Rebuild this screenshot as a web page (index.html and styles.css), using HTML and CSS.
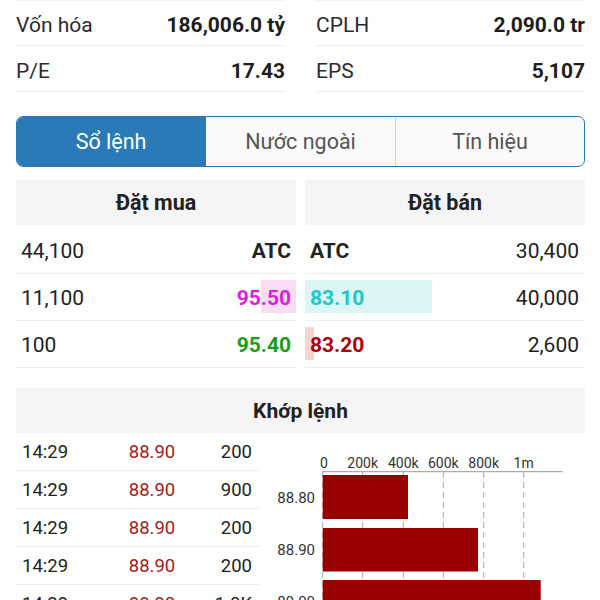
FILE: index.html
```html
<!DOCTYPE html>
<html lang="vi">
<head>
<meta charset="utf-8">
<link rel="stylesheet" href="styles.css">
</head>
<body>
<div class="page">
  <div class="stats">
    <div class="stat"><span class="lbl">Vốn hóa</span><span class="val">186,006.0 tỷ</span></div>
    <div class="stat"><span class="lbl">CPLH</span><span class="val">2,090.0 tr</span></div>
    <div class="stat"><span class="lbl">P/E</span><span class="val">17.43</span></div>
    <div class="stat"><span class="lbl">EPS</span><span class="val">5,107</span></div>
  </div>

  <div class="tabs">
    <div class="tab active">Sổ lệnh</div>
    <div class="tab">Nước ngoài</div>
    <div class="tab">Tín hiệu</div>
  </div>

  <div class="book">
    <div class="side buy">
      <div class="head">Đặt mua</div>
      <div class="rows">
        <div class="row"><span class="qty">44,100</span><span class="px atc">ATC</span></div>
        <div class="row"><span class="bar pink" style="width:35px"></span><span class="qty">11,100</span><span class="px magenta">95.50</span></div>
        <div class="row"><span class="qty">100</span><span class="px green">95.40</span></div>
      </div>
    </div>
    <div class="side sell">
      <div class="head">Đặt bán</div>
      <div class="rows">
        <div class="row"><span class="px atc">ATC</span><span class="qty">30,400</span></div>
        <div class="row"><span class="bar cyan" style="width:127px"></span><span class="px cyanc">83.10</span><span class="qty">40,000</span></div>
        <div class="row"><span class="bar red" style="width:9px"></span><span class="px redc">83.20</span><span class="qty">2,600</span></div>
      </div>
    </div>
  </div>

  <div class="match-head">Khớp lệnh</div>
  <div class="match">
    <div class="trades">
      <div class="trade"><span class="t">14:29</span><span class="p">88.90</span><span class="v">200</span></div>
      <div class="trade"><span class="t">14:29</span><span class="p">88.90</span><span class="v">900</span></div>
      <div class="trade"><span class="t">14:29</span><span class="p">88.90</span><span class="v">200</span></div>
      <div class="trade"><span class="t">14:29</span><span class="p">88.90</span><span class="v">200</span></div>
      <div class="trade"><span class="t">14:29</span><span class="p">88.90</span><span class="v">1.0K</span></div>
    </div>
    <svg class="chart" width="325" height="168" viewBox="0 0 325 168">
      <g class="grid">
        <line x1="62.7" y1="39" x2="62.7" y2="168"/>
        <line x1="102.7" y1="39" x2="102.7" y2="168"/>
        <line x1="143.3" y1="39" x2="143.3" y2="168"/>
        <line x1="183.3" y1="39" x2="183.3" y2="168"/>
        <line x1="223.7" y1="39" x2="223.7" y2="168"/>
        <line x1="263.7" y1="39" x2="263.7" y2="168"/>
      </g>
      <line class="axis" x1="62" y1="38.7" x2="302.7" y2="38.7"/>
      <g class="xl">
        <text x="64" y="34.5">0</text>
        <text x="102.7" y="34.5">200k</text>
        <text x="143.3" y="34.5">400k</text>
        <text x="183.3" y="34.5">600k</text>
        <text x="223.7" y="34.5">800k</text>
        <text x="263.7" y="34.5">1m</text>
      </g>
      <rect class="b" x="62.7" y="42" width="85.3" height="44"/>
      <rect class="b" x="62.7" y="95" width="155.3" height="43.5"/>
      <rect class="b" x="62.7" y="147" width="218" height="30"/>
      <g class="yl">
        <text x="55" y="69.5">88.80</text>
        <text x="55" y="121.5">88.90</text>
        <text x="55" y="173.5">89.00</text>
      </g>
    </svg>
  </div>
</div>
</body>
</html>
```
FILE: styles.css
```css
* { box-sizing: border-box; }
html, body { margin: 0; padding: 0; background: #fff; }
body {
  font-family: Roboto, "Noto Sans", "Liberation Sans", sans-serif;
  color: #222;
  width: 600px;
  height: 600px;
  overflow: hidden;
}
.page { padding: 0 15px 0 16px; }

.stats {
  display: grid;
  grid-template-columns: 1fr 1fr;
  column-gap: 31px;
}
.stat {
  display: flex;
  justify-content: space-between;
  align-items: center;
  height: 46px;
  padding: 4px 0 0 0;
  border-bottom: 1px solid #eeeeee;
  font-size: 21px;
}
.stat:nth-child(-n+2) { border-top: 1px solid #f2f2f2; }
.stat .lbl { color: #2b2b2b; }
.stat .val { font-weight: 700; color: #1e1e1e; }

.tabs {
  margin-top: 24px;
  display: grid;
  grid-template-columns: 1fr 1fr 1fr;
  height: 51px;
  border: 1.5px solid #2c78ae;
  border-radius: 7px;
  overflow: hidden;
  background: #fafafa;
}
.tab {
  display: flex;
  align-items: center;
  justify-content: center;
  font-size: 21.5px;
  color: #555;
}
.tab + .tab { border-left: 1px solid #c9d3dd; }
.tab.active { background: #2a7ab8; color: #fff; border-right: 1px solid #2a7ab8; }
.tab.active + .tab { border-left: none; }

.book {
  margin-top: 13px;
  display: grid;
  grid-template-columns: 1fr 1fr;
  column-gap: 9px;
}
.head {
  height: 45px;
  background: #f5f5f5;
  display: flex;
  align-items: center;
  justify-content: center;
  font-weight: 700;
  font-size: 21.5px;
  color: #222;
}
.rows { margin-top: 2px; }
.row {
  position: relative;
  height: 47px;
  padding-top: 2px;
  border-bottom: 1px solid #eeeeee;
  display: flex;
  align-items: center;
  justify-content: space-between;
  font-size: 21px;
}
.buy .row { padding-left: 5px; padding-right: 5px; }
.sell .row { padding-left: 5px; padding-right: 6px; }
.row span { position: relative; }
.row .bar { position: absolute; top: 6px; bottom: 7px; }
.buy .bar { right: 0; }
.sell .bar { left: 0; }
.bar.pink { background: #fbdcf7; }
.bar.cyan { background: #dcf5f5; }
.bar.red { background: #f6d4d4; }
.qty { color: #222; }
.px { font-weight: 700; }
.atc { color: #222; }
.magenta { color: #dd1fdd; }
.green { color: #16a016; }
.cyanc { color: #1ec8c8; }
.redc { color: #b00000; }

.match-head {
  margin-top: 20px;
  height: 45px;
  background: #f5f5f5;
  display: flex;
  align-items: center;
  justify-content: center;
  font-weight: 700;
  font-size: 21px;
}
.match { display: flex; }
.trades { width: 244px; flex: none; }
.trade {
  display: grid;
  grid-template-columns: 91px 78px 1fr;
  align-items: center;
  height: 38px;
  padding: 0 8px 0 6px;
  border-bottom: 1px solid #eeeeee;
  font-size: 18.5px;
  color: #222;
}
.trade .p { text-align: center; color: #a31b1b; }
.trade .v { text-align: right; }
.chart { flex: none; display: block; }
.grid line { stroke: #aaaaaa; stroke-width: 1; stroke-dasharray: 6 4; }
.axis { stroke: #999999; stroke-width: 1; }
.xl text { font-family: Roboto, sans-serif; font-size: 14px; fill: #333; text-anchor: middle; }
.yl text { font-family: Roboto, sans-serif; font-size: 15px; fill: #333; text-anchor: end; }
.b { fill: #990000; }
```
